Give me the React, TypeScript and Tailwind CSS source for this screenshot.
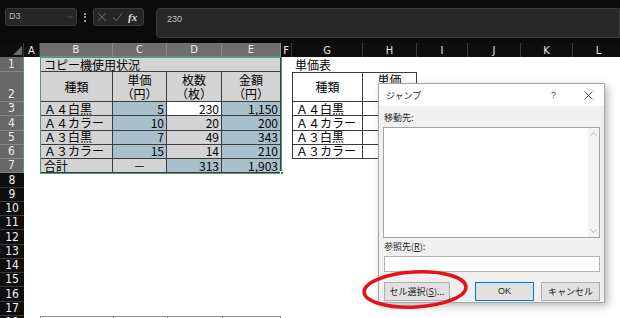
import React from 'react';

const jp = "font-['Noto_Sans_CJK_JP',sans-serif]";
const hd = "font-['DejaVu_Sans_Condensed','Liberation_Sans_Narrow','Liberation_Sans',sans-serif]";

// column widths: A..L
const cols: { k: string; w: string; sel?: boolean }[] = [
  { k: 'A', w: 'w-[16px]' },
  { k: 'B', w: 'w-[73px]', sel: true },
  { k: 'C', w: 'w-[54px]', sel: true },
  { k: 'D', w: 'w-[55px]', sel: true },
  { k: 'E', w: 'w-[59px]', sel: true },
  { k: 'F', w: 'w-[11px]' },
  { k: 'G', w: 'w-[71px]' },
  { k: 'H', w: 'w-[54px]' },
  { k: 'I', w: 'w-[51px]' },
  { k: 'J', w: 'w-[53px]' },
  { k: 'K', w: 'w-[52px]' },
  { k: 'L', w: 'w-[52px]' },
];

const gray = 'bg-[#d3d3d3]';
const blue = 'bg-[#a8bfcc]';
const bd = 'border-[#3c3c3c]';

const Cell = ({ w, cls = '', children }: { w: string; cls?: string; children?: React.ReactNode }) => (
  <div className={`${w} shrink-0 h-full flex items-center whitespace-nowrap ${cls}`}>{children}</div>
);

const SheetRow = ({ n, h, sel, children }: { n: number; h: string; sel?: boolean; children?: React.ReactNode }) => (
  <div className={`flex ${h} shrink-0`}>
    <div
      className={`w-[24px] shrink-0 h-full flex items-end justify-center pb-px border-b text-[12px] leading-none ${hd} ${
        sel ? 'bg-[#686868] text-[#ececec] border-[#858585] border-r border-r-[#4f9a7a]' : 'bg-[#0e0e0e] text-[#f2f2f2] border-[#3a3a3a]'
      }`}
    >
      {n}
    </div>
    {children}
  </div>
);

const Blank = ({ from }: { from: number }) => (
  <>
    {cols.slice(from).map((c) => (
      <Cell key={c.k} w={c.w} />
    ))}
  </>
);

const TwoLine = ({ a, b }: { a: string; b: string }) => (
  <div className="w-full flex flex-col items-center gap-[2px] leading-[12px]">
    <span>{a}</span>
    <span>{b}</span>
  </div>
);

const data = [
  { n: 3, label: 'Ａ４白黒', c: '5', d: '230', e: '1,150', active: true },
  { n: 4, label: 'Ａ４カラー', c: '10', d: '20', e: '200' },
  { n: 5, label: 'Ａ３白黒', c: '7', d: '49', e: '343' },
  { n: 6, label: 'Ａ３カラー', c: '15', d: '14', e: '210' },
];

function TopBar() {
  return (
    <div className="h-[43px] bg-[#0b0b0b] flex items-start pt-[8px] pl-[5px] shrink-0">
      <div className="w-[72px] h-[18px] rounded-[3px] bg-[#262626] border border-[#3a3a3a] flex items-center justify-between pl-[3px] pr-[3px] font-['Liberation_Sans',sans-serif] text-[9px] text-[#bdbdbd]">
        <span>D3</span>
        <svg width="5" height="4" viewBox="0 0 5 4">
          <path d="M0.5 1 L2.5 3 L4.5 1" stroke="#6a6a6a" strokeWidth="0.8" fill="none" />
        </svg>
      </div>
      <div className="w-[16px] h-[18px] flex flex-col items-center justify-center gap-[1.5px]">
        <span className="w-[2px] h-[2px] bg-[#9a9a9a]" />
        <span className="w-[2px] h-[2px] bg-[#9a9a9a]" />
        <span className="w-[2px] h-[2px] bg-[#9a9a9a]" />
      </div>
      <div className="w-[51px] h-[18px] rounded-[3px] bg-[#262626] border border-[#3a3a3a] flex items-center pl-[3px] gap-[5px]">
        <svg width="10" height="10" viewBox="0 0 10 10">
          <path d="M1 1 L9 9 M9 1 L1 9" stroke="#6c6c6c" strokeWidth="1" />
        </svg>
        <svg width="11" height="10" viewBox="0 0 11 10">
          <path d="M1 5 L4 8.5 L10 1.5" stroke="#6c6c6c" strokeWidth="1" fill="none" />
        </svg>
        <span className="font-['Liberation_Serif',serif] italic font-bold text-[11px] text-[#dedede] leading-none">fx</span>
      </div>
      <div className="ml-[12px] flex-1 h-[30px] rounded-l-[4px] bg-[#282828] border border-[#3c3c3c] pl-[10px] pt-[4px] font-['Liberation_Sans',sans-serif] text-[9px] text-[#c2c2c2]">
        230
      </div>
    </div>
  );
}

function ColumnHeader() {
  return (
    <div className={`flex h-[14px] shrink-0 bg-[#0e0e0e] ${hd} text-[11px] leading-none`}>
      <div className="w-[24px] shrink-0 h-full flex items-end justify-end pr-[1px] pb-[2px] border-r border-[#3a3a3a]">
        <svg width="9" height="9" viewBox="0 0 9 9">
          <path d="M9 0 L9 9 L0 9 Z" fill="#6b6b6b" />
        </svg>
      </div>
      {cols.map((c) => (
        <div
          key={c.k}
          className={`${c.w} shrink-0 h-full flex items-center justify-center border-r ${
            c.sel ? 'bg-[#6e6e6e] text-[#ececec] border-[#8a8a8a] border-b border-b-[#4f9a7a]' : 'text-[#e6e6e6] border-[#3a3a3a]'
          }`}
        >
          {c.k}
        </div>
      ))}
    </div>
  );
}

function Sheet() {
  const rh = 'h-[14.27px]';
  return (
    <div className={`flex flex-col ${jp} text-[12px] text-black leading-none`}>
      <SheetRow n={1} h="h-[15px]" sel>
        <Cell w="w-[16px]" />
        <Cell w="w-[241px]" cls={`${gray} border ${bd} pl-[3px]`}>コピー機使用状況</Cell>
        <Cell w="w-[11px]" />
        <Cell w="w-[71px]" cls="pl-[3px]">単価表</Cell>
        <Blank from={7} />
      </SheetRow>
      <SheetRow n={2} h="h-[30px]" sel>
        <Cell w="w-[16px]" />
        <Cell w="w-[73px]" cls={`${gray} border-l border-r border-b ${bd} justify-center`}>種類</Cell>
        <Cell w="w-[54px]" cls={`${gray} border-r border-b ${bd}`}><TwoLine a="単価" b="（円）" /></Cell>
        <Cell w="w-[55px]" cls={`${gray} border-r border-b ${bd}`}><TwoLine a="枚数" b="（枚）" /></Cell>
        <Cell w="w-[59px]" cls={`${gray} border-r border-b ${bd}`}><TwoLine a="金額" b="（円）" /></Cell>
        <Cell w="w-[11px]" />
        <Cell w="w-[71px]" cls={`border ${bd} justify-center`}>種類</Cell>
        <Cell w="w-[54px]" cls={`border-t border-r border-b ${bd}`}><TwoLine a="単価" b="（円）" /></Cell>
        <Blank from={8} />
      </SheetRow>
      {data.map((r) => (
        <SheetRow key={r.n} n={r.n} h={rh} sel>
          <Cell w="w-[16px]" />
          <Cell w="w-[73px]" cls={`${gray} border-l border-r border-b ${bd} pl-[3px]`}>{r.label}</Cell>
          <Cell w="w-[54px]" cls={`${blue} border-r border-b ${bd} justify-end pr-[2px]`}>{r.c}</Cell>
          <Cell w="w-[55px]" cls={`${r.active ? 'bg-white' : gray} border-r border-b ${bd} justify-end pr-[2px]`}>{r.d}</Cell>
          <Cell w="w-[59px]" cls={`${blue} border-r border-b ${bd} justify-end pr-[2px]`}>{r.e}</Cell>
          <Cell w="w-[11px]" />
          <Cell w="w-[71px]" cls={`border-l border-r border-b ${bd} pl-[3px]`}>{r.label}</Cell>
          <Cell w="w-[54px]" cls={`border-r border-b ${bd}`} />
          <Blank from={8} />
        </SheetRow>
      ))}
      <SheetRow n={7} h={rh} sel>
        <Cell w="w-[16px]" />
        <Cell w="w-[73px]" cls={`${gray} border-l border-r border-b ${bd} pl-[3px]`}>合計</Cell>
        <Cell w="w-[54px]" cls={`${gray} border-r border-b ${bd} justify-center`}>－</Cell>
        <Cell w="w-[55px]" cls={`${blue} border-r border-b ${bd} justify-end pr-[2px]`}>313</Cell>
        <Cell w="w-[59px]" cls={`${blue} border-r border-b ${bd} justify-end pr-[2px]`}>1,903</Cell>
        <Blank from={5} />
      </SheetRow>
      {[8, 9, 10, 11, 12, 13, 14, 15, 16, 17].map((n) => (
        <SheetRow key={n} n={n} h={rh}>
          <Blank from={0} />
        </SheetRow>
      ))}
      <SheetRow n={18} h={rh}>
        <Cell w="w-[16px]" />
        <Cell w="w-[73px]" cls="border-t border-l border-[#8a8a8a]" />
        <Cell w="w-[54px]" cls="border-t border-l border-[#8a8a8a]" />
        <Cell w="w-[55px]" cls="border-t border-l border-[#8a8a8a]" />
        <Cell w="w-[59px]" cls="border-t border-l border-r border-[#8a8a8a]" />
        <Blank from={5} />
      </SheetRow>
    </div>
  );
}

function JumpDialog() {
  return (
    <div className={`absolute left-[378px] top-[83px] w-[227px] h-[220px] flex flex-col border border-[#a6a6a6] shadow-[3px_3px_8px_rgba(0,0,0,0.28)] ${jp} text-[9px] text-[#1e1e1e] leading-none`}>
      <div className="h-[22px] bg-white flex items-center pl-[7px] shrink-0">
        <span className="flex-1">ジャンプ</span>
        <span className="w-[10px] text-[#555] font-['Liberation_Sans',sans-serif]">?</span>
        <svg className="ml-[23px] mr-[11px]" width="9" height="9" viewBox="0 0 9 9">
          <path d="M0.5 0.5 L8.5 8.5 M8.5 0.5 L0.5 8.5" stroke="#333" strokeWidth="0.9" />
        </svg>
      </div>
      <div className="flex-1 bg-[#f0f0f0] px-[4px] pt-[7px] flex flex-col">
        <div className="pl-[1px] h-[12px]">移動先:</div>
        <div className="mt-[2px] h-[111px] bg-white border border-[#a3a3a3] flex justify-end">
          <div className="w-[11px] h-full bg-[#f3f3f3] flex flex-col items-center justify-between py-[4px]">
            <svg width="7" height="4" viewBox="0 0 7 4">
              <path d="M0.5 3.5 L3.5 0.5 L6.5 3.5" stroke="#a8a8a8" strokeWidth="0.9" fill="none" />
            </svg>
            <svg width="7" height="4" viewBox="0 0 7 4">
              <path d="M0.5 0.5 L3.5 3.5 L6.5 0.5" stroke="#a8a8a8" strokeWidth="0.9" fill="none" />
            </svg>
          </div>
        </div>
        <div className="mt-[4px] pl-[1px] h-[12px]">
          参照先(<span className="underline">R</span>):
        </div>
        <div className="mt-[2px] ml-[1px] h-[16px] bg-white border border-[#b4b4b4]" />
        <div className="mt-[10px] ml-[1px] flex h-[19px]">
          <div className="w-[66px] h-full bg-[#e1e1e1] border border-[#adadad] flex items-center justify-center">
            セル選択(<span className="underline">S</span>)...
          </div>
          <div className="ml-[25px] w-[59px] h-full bg-[#e1e1e1] border border-[#0078d7] flex items-center justify-center font-['Liberation_Sans',sans-serif] text-[9px]">
            OK
          </div>
          <div className="ml-[7px] w-[59px] h-full bg-[#e1e1e1] border border-[#adadad] flex items-center justify-center">
            キャンセル
          </div>
        </div>
      </div>
    </div>
  );
}

export default function App() {
  return (
    <div className="relative w-[620px] h-[318px] overflow-hidden bg-white flex flex-col">
      <TopBar />
      <ColumnHeader />
      <Sheet />
      {/* selected range outline B1:E7 */}
      <div className="absolute left-[40px] top-[57px] w-[242px] h-[117px] border border-[#4f9a7a] pointer-events-none" />
      <div className="absolute left-[280px] top-[171px] w-[4px] h-[4px] bg-[#3e8a66] border border-white" />
      <JumpDialog />
      {/* red highlight */}
      <svg className="absolute left-[360px] top-[268px]" width="112" height="44" viewBox="0 0 112 44">
        <ellipse cx="55" cy="21.5" rx="51" ry="17.5" fill="none" stroke="#e3121b" strokeWidth="3.5" transform="rotate(-3 55 21.5)" />
      </svg>
    </div>
  );
}
